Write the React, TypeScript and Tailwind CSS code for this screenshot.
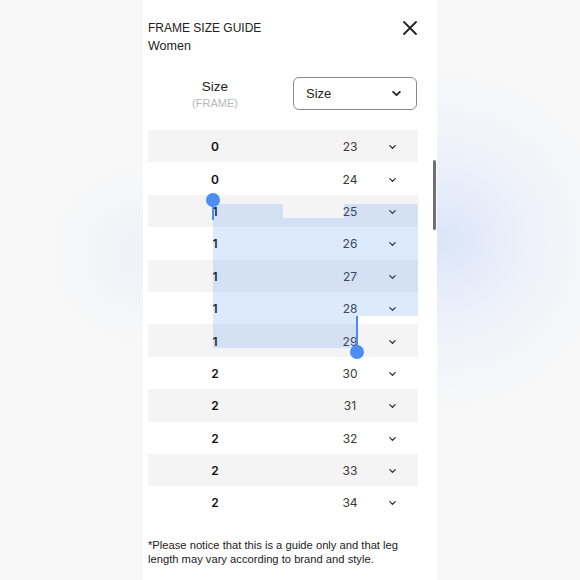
import React from 'react';

const rows: [number, number][] = [
  [0, 23], [0, 24], [1, 25], [1, 26], [1, 27], [1, 28],
  [1, 29], [2, 30], [2, 31], [2, 32], [2, 33], [2, 34],
];

function Chevron({ className }: { className?: string }) {
  return (
    <svg viewBox="0 0 10 6" className={className} fill="none" stroke="currentColor" strokeLinecap="round" strokeLinejoin="round">
      <path d="M1 1l4 4 4-4" />
    </svg>
  );
}

export default function App() {
  return (
    <div className="flex h-[580px] w-full justify-center overflow-hidden bg-[#f8f8f8] bg-[radial-gradient(circle_at_445px_240px,#dbe5f8_0px,#edf1fa_80px,transparent_170px),radial-gradient(circle_at_138px_255px,#eef1f8_0px,transparent_90px)]">
      <div className="relative h-full w-[294px] bg-white pl-[5px] pr-[19px] font-['Liberation_Sans',Arial,sans-serif] text-[#222]">
        {/* header */}
        <div className="flex items-start justify-between pt-[19px]">
          <div className="text-[12px] leading-[18px]">
            <div>FRAME SIZE GUIDE</div>
            <div className="text-[12.5px]">Women</div>
          </div>
          <svg viewBox="0 0 14 14" className="mr-[1px] mt-[2px] h-[14px] w-[14px] text-[#222]" stroke="currentColor" strokeWidth="1.8" strokeLinecap="round">
            <path d="M1 1l12 12M13 1L1 13" />
          </svg>
        </div>

        {/* size filter */}
        <div className="mt-[22px] flex items-start">
          <div className="mt-[2px] w-[134px] text-center">
            <div className="text-[13.5px] leading-[16px]">Size</div>
            <div className="text-[11px] leading-[16px] text-[#b8b8b8]">(FRAME)</div>
          </div>
          <div className="ml-[11px] flex h-[33px] w-[124px] items-center justify-between rounded-[6px] border border-[#8a8a8a] pl-[12px] pr-[15px] text-[13px]">
            <span>Size</span>
            <Chevron className="h-[5px] w-[9px] stroke-[2.2]" />
          </div>
        </div>

        {/* table */}
        <div className="mt-[19px] font-['Inter',sans-serif] text-[12px]">
          {rows.map(([frame, size], i) => (
            <div key={size} className={`flex h-[32.4px] items-center pt-[2px] ${i % 2 === 0 ? 'bg-[#f4f4f4]' : 'bg-white'}`}>
              <div className="w-[134px] text-center font-semibold text-[#111]">{frame}</div>
              <div className="ml-[34px] w-[68px] text-center text-[#3a3a3a]">{size}</div>
              <div className="flex w-[16px] justify-center text-[#222]">
                <Chevron className="h-[4px] w-[7px] stroke-[1.8]" />
              </div>
            </div>
          ))}
        </div>

        {/* note */}
        <p className="mt-[19px] text-[11.2px] leading-[14px] text-[#222]">
          *Please notice that this is a guide only and that leg length may vary according to brand and style.
        </p>

        {/* text selection overlay */}
        <div className="pointer-events-none absolute left-[70px] top-[204px] h-[14px] w-[70px] bg-[rgba(66,133,244,0.18)]" />
        <div className="pointer-events-none absolute left-[201px] top-[204px] h-[14px] w-[74px] bg-[rgba(66,133,244,0.18)]" />
        <div className="pointer-events-none absolute left-[70px] top-[218px] h-[98px] w-[205px] bg-[rgba(66,133,244,0.18)]" />
        <div className="pointer-events-none absolute left-[70px] top-[316px] h-[32px] w-[144px] bg-[rgba(66,133,244,0.18)]" />
        <div className="pointer-events-none absolute left-[69px] top-[200px] h-[20px] w-[2px] bg-[#4a8ef5]" />
        <div className="pointer-events-none absolute left-[63px] top-[193px] h-[14px] w-[14px] rounded-full bg-[#4a8ef5]" />
        <div className="pointer-events-none absolute left-[213px] top-[316px] h-[32px] w-[2px] bg-[#4a8ef5]" />
        <div className="pointer-events-none absolute left-[207px] top-[345px] h-[14px] w-[14px] rounded-full bg-[#4a8ef5]" />

        {/* scrollbar */}
        <div className="absolute left-[290px] top-[160px] h-[70px] w-[3px] rounded-full bg-[#707070]" />
      </div>
    </div>
  );
}
